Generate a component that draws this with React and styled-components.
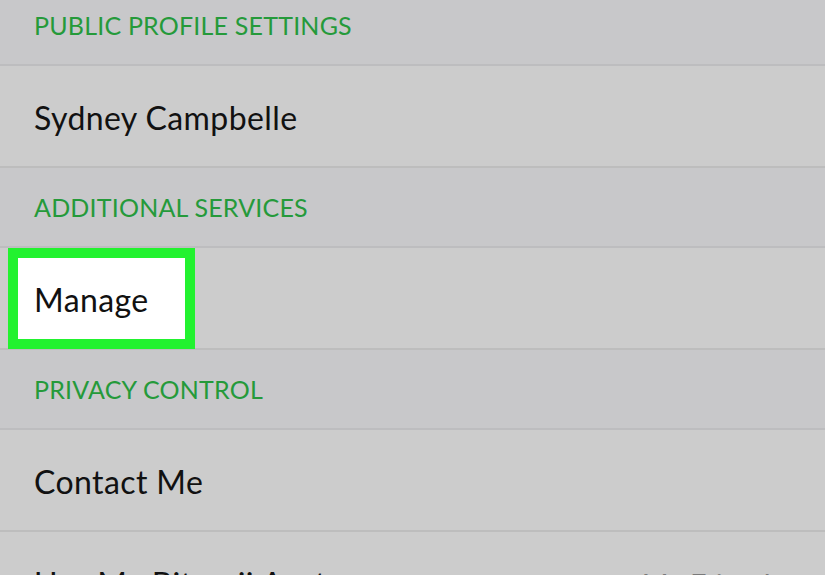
import styled, { createGlobalStyle } from "styled-components";

const GlobalStyle = createGlobalStyle`
  html, body {
    margin: 0;
    padding: 0;
    background: #cbcbcb;
    overflow: hidden;
  }
  body {
    font-family: Lato, "Noto Sans", sans-serif;
  }
`;

const sections = [
  { title: "PUBLIC PROFILE SETTINGS", rows: [{ label: "Sydney Campbelle" }] },
  { title: "ADDITIONAL SERVICES", rows: [{ label: "Manage", highlight: true }] },
  {
    title: "PRIVACY CONTROL",
    rows: [
      { label: "Contact Me" },
      { label: "Use My Bitmoji Avatar", value: "My Friends" },
    ],
  },
];

export default function App() {
  return (
    <>
      <GlobalStyle />
      <Screen>
        <List>
          {sections.map((s) => (
            <Section key={s.title}>
              <SectionHeader>{s.title}</SectionHeader>
              {s.rows.map((r) => (
                <Row key={r.label} $highlight={r.highlight}>
                  <Label>{r.label}</Label>
                  {r.value && <Value>{r.value}</Value>}
                </Row>
              ))}
            </Section>
          ))}
        </List>
      </Screen>
    </>
  );
}

const Screen = styled.div`
  width: 825px;
  height: 575px;
  overflow: hidden;
  background: #cbcbcb;
`;

const List = styled.div`
  display: flex;
  flex-direction: column;
  margin-top: -14px;
`;

const Section = styled.section`
  display: flex;
  flex-direction: column;
`;

const SectionHeader = styled.div`
  height: 80px;
  box-sizing: border-box;
  display: flex;
  align-items: center;
  padding: 0 34px;
  background: #c8c8ca;
  border-bottom: 2px solid #bdbdbf;
  color: #259a3a;
  font-size: 25px;
  letter-spacing: 0.2px;
`;

const Row = styled.div`
  position: relative;
  height: 102px;
  box-sizing: border-box;
  display: flex;
  align-items: center;
  justify-content: space-between;
  padding: 2px 42px 0 34px;
  background: #cccccc;
  border-bottom: 2px solid #bdbdbd;

  ${({ $highlight }) =>
    $highlight &&
    `
    &::before {
      content: "";
      position: absolute;
      left: 8px;
      top: 0;
      width: 187px;
      bottom: -1px;
      box-sizing: border-box;
      background: #fff;
      border: 10px solid #22f22f;
    }
  `}
`;

const Label = styled.span`
  position: relative;
  color: #111;
  font-size: 32px;
  letter-spacing: 0.4px;
`;

const Value = styled.span`
  position: relative;
  color: #7a7a7a;
  font-size: 29px;
`;
